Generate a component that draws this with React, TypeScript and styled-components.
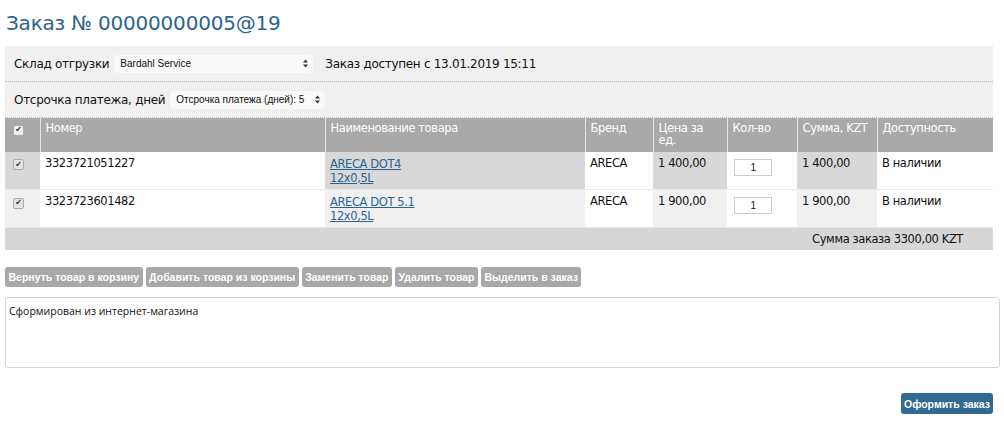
import React from "react";
import styled, { createGlobalStyle } from "styled-components";

interface Item {
  id: string;
  number: string;
  name: string;
  pack: string;
  brand: string;
  price: string;
  qty: number;
  sum: string;
  stock: string;
}

const items: Item[] = [
  {
    id: "1",
    number: "3323721051227",
    name: "ARECA DOT4",
    pack: "12x0,5L",
    brand: "ARECA",
    price: "1 400,00",
    qty: 1,
    sum: "1 400,00",
    stock: "В наличии",
  },
  {
    id: "2",
    number: "3323723601482",
    name: "ARECA DOT 5.1",
    pack: "12x0,5L",
    brand: "ARECA",
    price: "1 900,00",
    qty: 1,
    sum: "1 900,00",
    stock: "В наличии",
  },
];

const actions = [
  "Вернуть товар в корзину",
  "Добавить товар из корзины",
  "Заменить товар",
  "Удалить товар",
  "Выделить в заказ",
];

const columns = [
  { title: "", w: 35 },
  { title: "Номер", w: 285 },
  { title: "Наименование товара", w: 260 },
  { title: "Бренд", w: 68 },
  { title: "Цена за ед.", w: 74 },
  { title: "Кол-во", w: 70 },
  { title: "Сумма, KZT", w: 80 },
  { title: "Доступность", w: 116 },
];

const GlobalStyle = createGlobalStyle`
  body {
    margin: 0;
    background: #fff;
    font-family: "DejaVu Sans", sans-serif;
    color: #111;
  }
`;

const Page = styled.div`
  width: 1004px;
  padding: 8px 11px 0 5px;
  box-sizing: border-box;
`;

const Title = styled.h1`
  margin: 0 0 8px 1px;
  font-family: "DejaVu Sans", sans-serif;
  font-weight: normal;
  font-size: 20px;
  line-height: 30px;
  letter-spacing: -0.2px;
  color: #2c6390;
`;

const Panel = styled.div`
  background: #f0f0f0;
  width: 988px;
`;

const PanelRow = styled.div`
  display: flex;
  align-items: center;
  gap: 5px;
  height: 35px;
  padding: 0 9px;
  border-bottom: 1px dotted #bbb;
  &:last-child {
    border-bottom: none;
  }
`;

const Label = styled.span<{ $gap?: number }>`
  font-size: 12px;
  letter-spacing: -0.3px;
  margin-left: ${({ $gap }) => $gap ?? 0}px;
`;

const SelectBox = styled.div<{ $width: number }>`
  display: flex;
  align-items: center;
  justify-content: space-between;
  width: ${({ $width }) => $width}px;
  height: 18px;
  padding: 0 5px 0 6px;
  box-sizing: border-box;
  background: #f9f9f9;
  border-radius: 4px;
  font-family: "Liberation Sans", Arial, sans-serif;
  font-size: 10px;
  color: #111;
`;

const Arrows: React.FC = () => (
  <svg width="5" height="9" viewBox="0 0 5 9">
    <path d="M2.5 0.5 L5 3.5 L0 3.5 Z M2.5 8.5 L5 5.5 L0 5.5 Z" fill="#333" />
  </svg>
);

const Table = styled.table`
  width: 988px;
  border-collapse: collapse;
  table-layout: fixed;
`;

const Th = styled.th<{ $w: number }>`
  width: ${({ $w }) => $w}px;
  height: 34px;
  background: #a9a9a9;
  color: #fff;
  font-weight: normal;
  text-align: left;
  vertical-align: top;
  padding: 4px 5px 0;
  box-sizing: border-box;
  border-left: 1px solid #e4e4e4;
  border-top: 1px dotted #bbb;
  font-size: 11.5px;
  line-height: 12px;
  letter-spacing: -0.4px;
  &:first-child {
    border-left: none;
  }
`;

const Td = styled.td<{ $shade: boolean; $odd: boolean }>`
  height: 38px;
  vertical-align: top;
  padding: 5px 5px 0;
  box-sizing: border-box;
  background: ${({ $shade, $odd }) =>
    $shade ? ($odd ? "#d8d8d8" : "#f0f0f0") : "#fff"};
  border-bottom: 1px solid #e8e8e8;
  font-size: 11.5px;
  line-height: 13px;
  letter-spacing: -0.4px;
`;

const Check = styled.span<{ $head?: boolean }>`
  display: inline-flex;
  align-items: center;
  justify-content: center;
  width: 9px;
  height: 9px;
  margin: 2px 0 0 3px;
  border-radius: 2px;
  background: ${({ $head }) => ($head ? "#eee" : "#e6e6e6")};
  border: 1px solid #aaa;
  font-size: 8px;
  line-height: 1;
  color: #333;
`;

const ProductLink = styled.a`
  display: block;
  color: #2c6390;
  text-decoration: underline;
  margin-top: 1px;
`;

const QtyInput = styled.div`
  width: 36px;
  height: 15px;
  margin: 2px 0 0 2px;
  border: 1px solid #ccc;
  background: #fff;
  font-family: "Liberation Sans", Arial, sans-serif;
  font-size: 10px;
  line-height: 15px;
  text-align: center;
`;

const Total = styled.div`
  width: 988px;
  height: 22px;
  background: #d6d6d6;
  display: flex;
  align-items: center;
  justify-content: flex-end;
  padding-right: 30px;
  box-sizing: border-box;
  font-size: 11.5px;
  letter-spacing: -0.4px;
`;

const Actions = styled.div`
  display: flex;
  gap: 3px;
  margin-top: 17px;
`;

const ActionButton = styled.button`
  height: 20px;
  padding: 0 3.5px;
  border: none;
  border-radius: 3px;
  background: #a8a8a8;
  color: #fff;
  font-family: "Liberation Sans", Arial, sans-serif;
  font-weight: bold;
  font-size: 10.5px;
`;

const Comment = styled.div`
  margin-top: 10px;
  width: 995px;
  height: 71px;
  border: 1px solid #d4d4d4;
  border-radius: 3px;
  box-sizing: border-box;
  padding: 6px 3px;
  font-family: "Open Sans", sans-serif;
  font-size: 10.5px;
`;

const Footer = styled.div`
  display: flex;
  justify-content: flex-end;
  width: 988px;
  margin-top: 25px;
`;

const SubmitButton = styled.button`
  height: 21px;
  padding: 0 3px;
  border: none;
  border-radius: 3px;
  background: #326991;
  color: #fff;
  font-family: "Liberation Sans", Arial, sans-serif;
  font-weight: bold;
  font-size: 10.5px;
`;

const App: React.FC = () => {
  return (
    <>
      <GlobalStyle />
      <Page>
        <Title>Заказ № 00000000005@19</Title>
        <Panel>
          <PanelRow>
            <Label>Склад отгрузки</Label>
            <SelectBox $width={199}>
              Bardahl Service
              <Arrows />
            </SelectBox>
            <Label $gap={7}>Заказ доступен с 13.01.2019 15:11</Label>
          </PanelRow>
          <PanelRow>
            <Label>Отсрочка платежа, дней</Label>
            <SelectBox $width={155}>
              Отсрочка платежа (дней): 5
              <Arrows />
            </SelectBox>
          </PanelRow>
        </Panel>
        <Table>
          <thead>
            <tr>
              {columns.map((c, i) => (
                <Th key={i} $w={c.w}>
                  {i === 0 ? <Check $head>✔</Check> : c.title}
                </Th>
              ))}
            </tr>
          </thead>
          <tbody>
            {items.map((item, r) => {
              const odd = r % 2 === 0;
              return (
                <tr key={item.id}>
                  <Td $shade $odd={odd}>
                    <Check>✔</Check>
                  </Td>
                  <Td $shade={false} $odd={odd}>
                    {item.number}
                  </Td>
                  <Td $shade $odd={odd}>
                    <ProductLink>{item.name}</ProductLink>
                    <ProductLink>{item.pack}</ProductLink>
                  </Td>
                  <Td $shade={false} $odd={odd}>
                    {item.brand}
                  </Td>
                  <Td $shade $odd={odd}>
                    {item.price}
                  </Td>
                  <Td $shade={false} $odd={odd}>
                    <QtyInput>{item.qty}</QtyInput>
                  </Td>
                  <Td $shade $odd={odd}>
                    {item.sum}
                  </Td>
                  <Td $shade={false} $odd={odd}>
                    {item.stock}
                  </Td>
                </tr>
              );
            })}
          </tbody>
        </Table>
        <Total>Сумма заказа 3300,00 KZT</Total>
        <Actions>
          {actions.map((a) => (
            <ActionButton key={a}>{a}</ActionButton>
          ))}
        </Actions>
        <Comment>Сформирован из интернет-магазина</Comment>
        <Footer>
          <SubmitButton>Оформить заказ</SubmitButton>
        </Footer>
      </Page>
    </>
  );
};

export default App;
